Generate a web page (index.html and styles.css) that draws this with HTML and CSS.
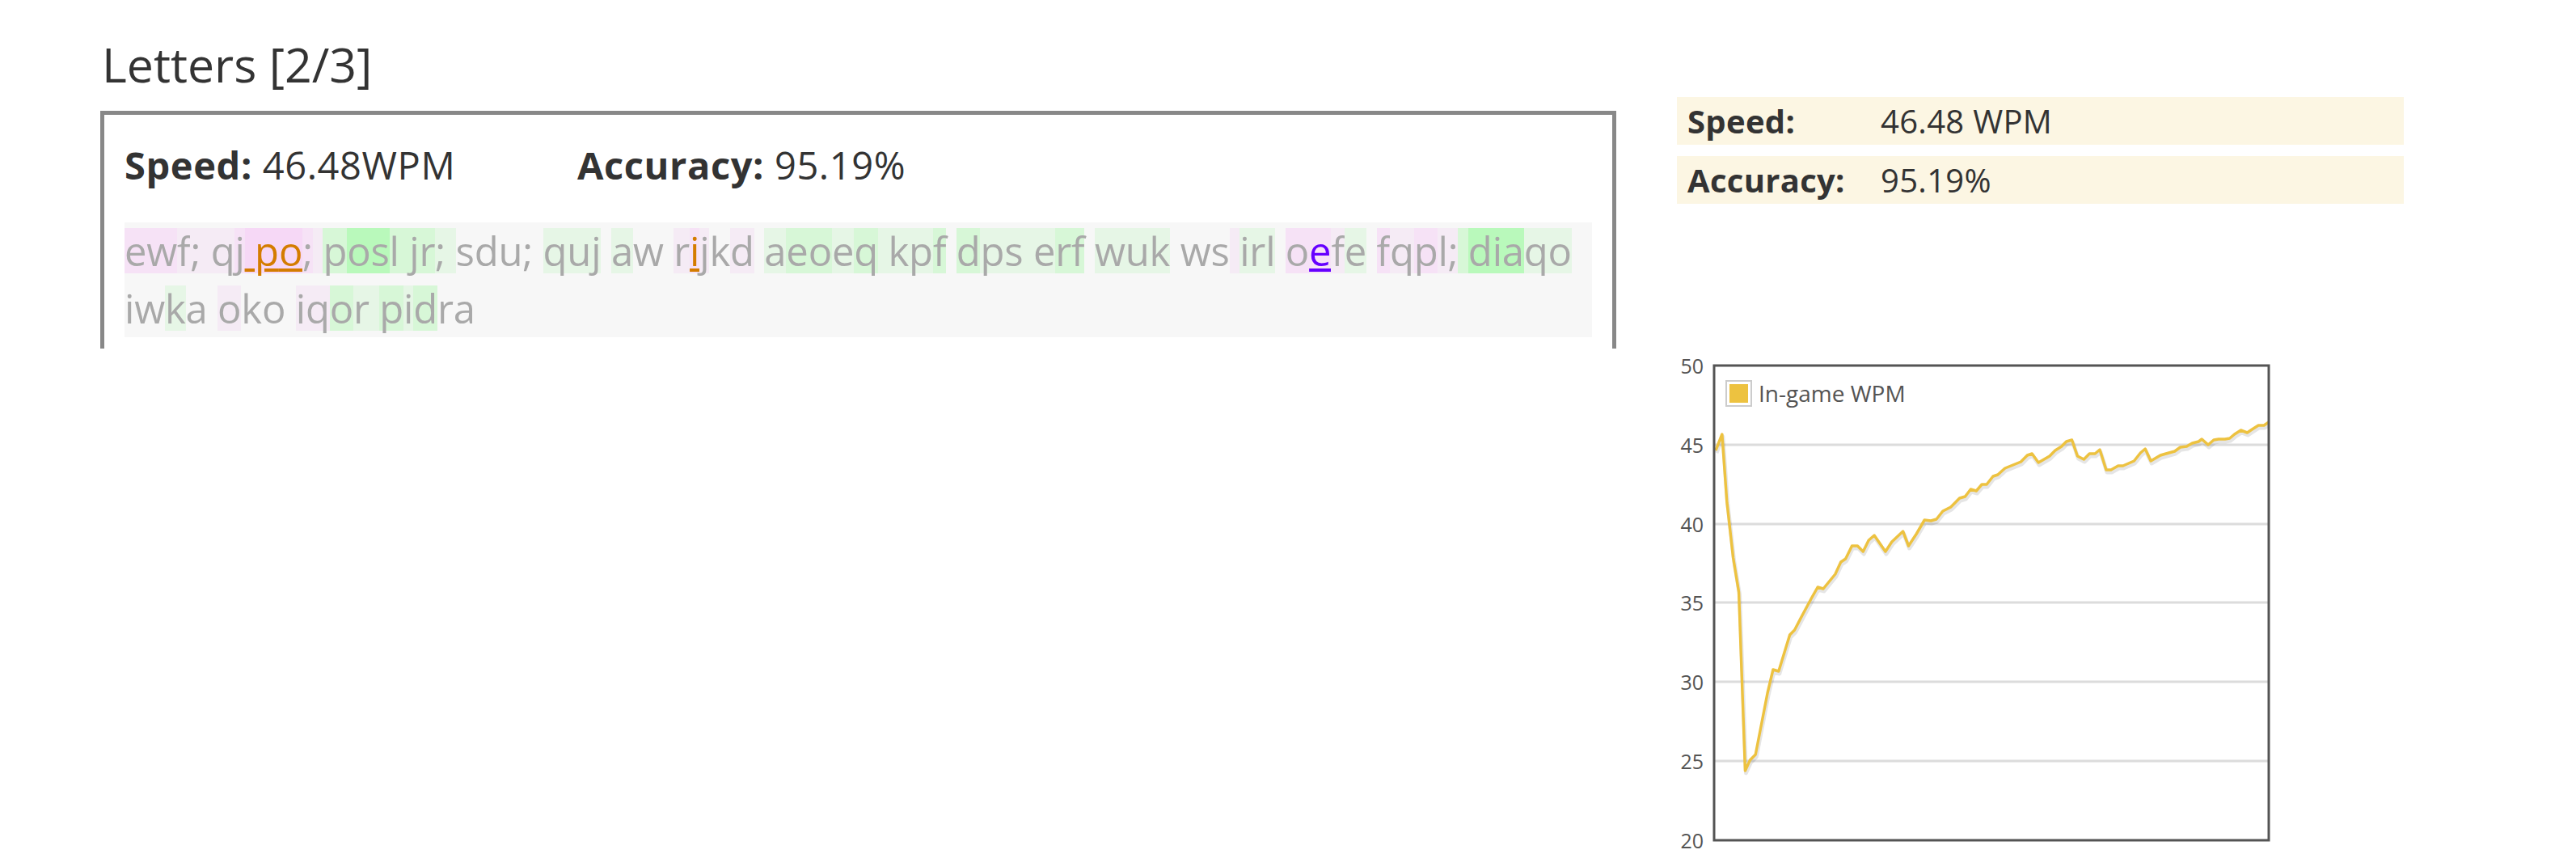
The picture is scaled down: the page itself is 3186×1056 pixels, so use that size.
FILE: index.html
```html
<!DOCTYPE html>
<html lang="en">
<head>
<meta charset="utf-8">
<title>Letters [2/3]</title>
<link rel="stylesheet" href="styles.css">
</head>
<body>
<div class="page">
  <section class="left">
    <h2 class="title">Letters [2/3]</h2>
    <div class="result-box">
      <div class="summary">
        <div class="summary-item summary-speed"><b>Speed:</b> 46.48WPM</div>
        <div class="summary-item"><b>Accuracy:</b> 95.19%</div>
      </div>
      <div class="typed"><span class="c p2">e</span><span class="c p2">w</span><span class="c p1">f</span><span class="c p1">;</span><span class="c p1"> </span><span class="c p1">q</span><span class="c p2">j</span><span class="c p3 err"> </span><span class="c p3 err">p</span><span class="c p3 err">o</span><span class="c p2">;</span><span class="c p1"> </span><span class="c g2">p</span><span class="c g3">o</span><span class="c g3">s</span><span class="c g2">l</span><span class="c g2"> </span><span class="c g2">j</span><span class="c g2">r</span><span class="c g1">;</span><span class="c g1"> </span><span class="c">s</span><span class="c">d</span><span class="c">u</span><span class="c">;</span><span class="c"> </span><span class="c g1">q</span><span class="c g1">u</span><span class="c g1">j</span><span class="c"> </span><span class="c g1">a</span><span class="c">w</span><span class="c"> </span><span class="c p1">r</span><span class="c p2 err">i</span><span class="c p1">j</span><span class="c">k</span><span class="c p1">d</span><span class="c"> </span><span class="c g1">a</span><span class="c g2">e</span><span class="c g2">o</span><span class="c g1">e</span><span class="c g2">q</span><span class="c g1"> </span><span class="c g1">k</span><span class="c g1">p</span><span class="c g2">f</span><span class="c"> </span><span class="c g2">d</span><span class="c g1">p</span><span class="c g1">s</span><span class="c g1"> </span><span class="c g1">e</span><span class="c g2">r</span><span class="c g2">f</span><span class="c"> </span><span class="c g1">w</span><span class="c g1">u</span><span class="c g1">k</span><span class="c"> </span><span class="c">w</span><span class="c">s</span><span class="c p1"> </span><span class="c g1">i</span><span class="c g1">r</span><span class="c g1">l</span><span class="c"> </span><span class="c p2">o</span><span class="c p2 miss">e</span><span class="c p1">f</span><span class="c g1">e</span><span class="c"> </span><span class="c p2">f</span><span class="c p1">q</span><span class="c p2">p</span><span class="c p1">l</span><span class="c p1">;</span><span class="c g2"> </span><span class="c g3">d</span><span class="c g3">i</span><span class="c g3">a</span><span class="c g1">q</span><span class="c g1">o</span><span class="c"> </span><span class="c">i</span><span class="c">w</span><span class="c g1">k</span><span class="c">a</span><span class="c"> </span><span class="c p1">o</span><span class="c">k</span><span class="c">o</span><span class="c"> </span><span class="c p1">i</span><span class="c p1">q</span><span class="c g2">o</span><span class="c g1">r</span><span class="c g1"> </span><span class="c g2">p</span><span class="c g1">i</span><span class="c g2">d</span><span class="c">r</span><span class="c">a</span></div>
    </div>
  </section>

  <aside class="right">
    <div class="stats">
      <div class="stat-row"><span class="stat-label">Speed:</span><span class="stat-value">46.48 WPM</span></div>
      <div class="stat-row"><span class="stat-label">Accuracy:</span><span class="stat-value">95.19%</span></div>
    </div>

    <svg class="chart" width="800" height="626" viewBox="0 0 800 626" xmlns="http://www.w3.org/2000/svg">
      <defs>
        <clipPath id="plot"><rect x="46" y="22" width="686" height="587"/></clipPath>
      </defs>
      <g class="grid">
        <line x1="46" y1="120" x2="732" y2="120"/>
        <line x1="46" y1="218" x2="732" y2="218"/>
        <line x1="46" y1="315" x2="732" y2="315"/>
        <line x1="46" y1="413" x2="732" y2="413"/>
        <line x1="46" y1="511" x2="732" y2="511"/>
      </g>
      <g class="axis-labels">
        <text x="33" y="32">50</text>
        <text x="33" y="130">45</text>
        <text x="33" y="228">40</text>
        <text x="33" y="325">35</text>
        <text x="33" y="423">30</text>
        <text x="33" y="521">25</text>
        <text x="33" y="619">20</text>
      </g>
      <g clip-path="url(#plot)">
        <g transform="matrix(0.9856 0 0 1 0.66 0)">
          <polyline class="series-shadow" transform="translate(1,3)" points="48,127 56,107 62,190 70,260 77,302 85,523 91,510 98,503 113,427 120,398 127,400 141,355 147,349 156,332 168,310 176,296 183,298 198,280 205,265 211,261 219,245 226,245 233,252 240,238 247,232 261,252 269,240 283,227 290,245 300,230 310,213 318,214 325,212 333,202 343,197 354,186 361,184 368,175 375,177 382,169 388,169 396,159 402,157 411,149 421,145 431,141 439,133 445,131 453,142 467,134 474,127 482,122 488,116 495,114 502,134 510,138 517,131 524,131 530,126 538,151 544,151 553,146 559,146 573,140 581,130 587,125 594,140 606,133 613,131 624,128 631,123 639,122 646,118 654,116 658,113 666,120 673,114 679,113 687,113 693,112 699,107 707,102 715,105 721,101 729,96 736,96 742,92"/>
          <polyline class="series" points="48,127 56,107 62,190 70,260 77,302 85,523 91,510 98,503 113,427 120,398 127,400 141,355 147,349 156,332 168,310 176,296 183,298 198,280 205,265 211,261 219,245 226,245 233,252 240,238 247,232 261,252 269,240 283,227 290,245 300,230 310,213 318,214 325,212 333,202 343,197 354,186 361,184 368,175 375,177 382,169 388,169 396,159 402,157 411,149 421,145 431,141 439,133 445,131 453,142 467,134 474,127 482,122 488,116 495,114 502,134 510,138 517,131 524,131 530,126 538,151 544,151 553,146 559,146 573,140 581,130 587,125 594,140 606,133 613,131 624,128 631,123 639,122 646,118 654,116 658,113 666,120 673,114 679,113 687,113 693,112 699,107 707,102 715,105 721,101 729,96 736,96 742,92"/>
        </g>
      </g>
      <rect class="plot-border" x="46" y="22" width="686" height="587"/>
      <g class="legend">
        <rect class="legend-frame" x="61" y="41" width="31" height="31"/>
        <rect class="legend-swatch" x="65" y="45" width="23" height="23"/>
        <text x="101" y="67">In-game WPM</text>
      </g>
    </svg>
  </aside>
</div>
</body>
</html>
```

FILE: styles.css
```css
html, body {
  margin: 0;
  padding: 0;
  background: #ffffff;
}

body {
  font-family: "Open Sans", "Noto Sans", sans-serif;
  color: #333333;
}

.page {
  display: flex;
  align-items: flex-start;
  gap: 75px;
  padding: 44px 0 0 124px;
}

/* ---------- left column ---------- */
.left {
  width: 1875px;
  flex: none;
}

.title {
  margin: 0;
  font-size: 59px;
  line-height: 70px;
  font-weight: 400;
  color: #333333;
  padding-left: 2px;
}

.result-box {
  margin-top: 23px;
  border: 5px solid #888888;
  border-bottom: none;
  padding: 32px 25px 14px;
}

.summary {
  display: flex;
  font-size: 47px;
  line-height: 60px;
  letter-spacing: 0.6px;
  color: #333333;
}

.summary b {
  font-weight: 700;
}

.summary-speed {
  width: 560px;
}

.typed {
  margin-top: 41px;
  background: #f7f7f7;
  font-size: 49px;
  line-height: 71px;
  letter-spacing: -0.2px;
  color: #a9a9a9;
}

.c {
  --hl: transparent;
  background-image: linear-gradient(var(--hl), var(--hl));
  background-size: 100% 56px;
  background-position: 0 5px;
  background-repeat: no-repeat;
}

.p1 { --hl: #f5ebf5; }
.p2 { --hl: #f6e2f6; }
.p3 { --hl: #f6d8f6; }
.g1 { --hl: #e6f6e6; }
.g2 { --hl: #d7f7d7; }
.g3 { --hl: #b9f9bb; }

.err {
  color: #d47c00;
  text-decoration: underline;
  text-decoration-thickness: 4px;
  text-underline-offset: 3px;
}

.miss {
  color: #6600ff;
  text-decoration: underline;
  text-decoration-thickness: 4px;
  text-underline-offset: 3px;
}

/* ---------- right column ---------- */
.right {
  width: 899px;
  flex: none;
  margin-top: 76px;
}

.stats {
  display: flex;
  flex-direction: column;
  gap: 14px;
}

.stat-row {
  display: flex;
  height: 59px;
  line-height: 59px;
  font-size: 40px;
  letter-spacing: 0.3px;
  background: #fcf6e3;
  color: #333333;
}

.stat-label {
  width: 239px;
  padding-left: 13px;
  font-weight: 700;
}

.chart {
  display: block;
  margin-top: 178px;
  overflow: visible;
}

.grid line {
  stroke: #dcdcdc;
  stroke-width: 3;
}

.axis-labels text {
  font-family: "Open Sans", sans-serif;
  font-size: 25px;
  fill: #545454;
  text-anchor: end;
}

.plot-border {
  fill: none;
  stroke: #545454;
  stroke-width: 3;
}

.series {
  fill: none;
  stroke: #edc240;
  stroke-width: 3.5;
  stroke-linejoin: round;
}

.series-shadow {
  fill: none;
  stroke: rgba(0, 0, 0, 0.1);
  stroke-width: 5;
  stroke-linejoin: round;
}

.legend-frame {
  fill: #ffffff;
  stroke: #cccccc;
  stroke-width: 2;
}

.legend-swatch {
  fill: #edc240;
}

.legend text {
  font-family: "Open Sans", sans-serif;
  font-size: 28px;
  fill: #545454;
}
```
